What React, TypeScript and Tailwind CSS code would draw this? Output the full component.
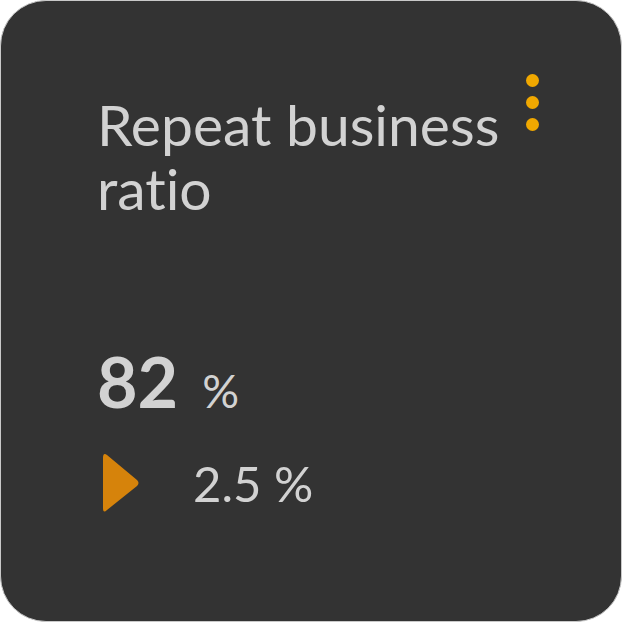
export default function App() {
  return (
    <div className="w-[622px] h-[622px] bg-white">
      <div
        className="w-[622px] h-[622px] rounded-[46px] border border-[#c9c9c9] bg-[#333333] text-[#d2d2d2] pl-[96px] pr-[82px] pt-[80px] flex flex-col"
        style={{ fontFamily: "Lato, 'Noto Sans', sans-serif", fontVariantLigatures: "none" }}
      >
        {/* head */}
        <div className="flex flex-row justify-between items-start">
          <h1 className="text-[57px] leading-[64px] font-normal w-[420px] mt-[11px]">Repeat business ratio</h1>
          <div className="flex flex-col gap-[9px] -mt-[7px]">
            <span className="w-[13px] h-[13px] rounded-full bg-[#f0a800]" />
            <span className="w-[13px] h-[13px] rounded-full bg-[#f0a800]" />
            <span className="w-[13px] h-[13px] rounded-full bg-[#f0a800]" />
          </div>
        </div>
        {/* value */}
        <div className="flex flex-row items-baseline mt-[126px]">
          <span className="text-[70px] leading-none font-bold">82</span>
          <span className="text-[46px] leading-none ml-[24px]">%</span>
        </div>
        {/* change */}
        <div className="flex flex-row items-center mt-[36px]">
          <svg width="40" height="62" viewBox="0 0 40 62" className="ml-[4px]">
            <path d="M6 3 Q2 0 2 6 L2 56 Q2 62 6 58 L36 34 Q39 31 36 28 Z" fill="#d6830b" />
          </svg>
          <span className="text-[49px] leading-none ml-[52px]">2.5 %</span>
        </div>
      </div>
    </div>
  )
}
